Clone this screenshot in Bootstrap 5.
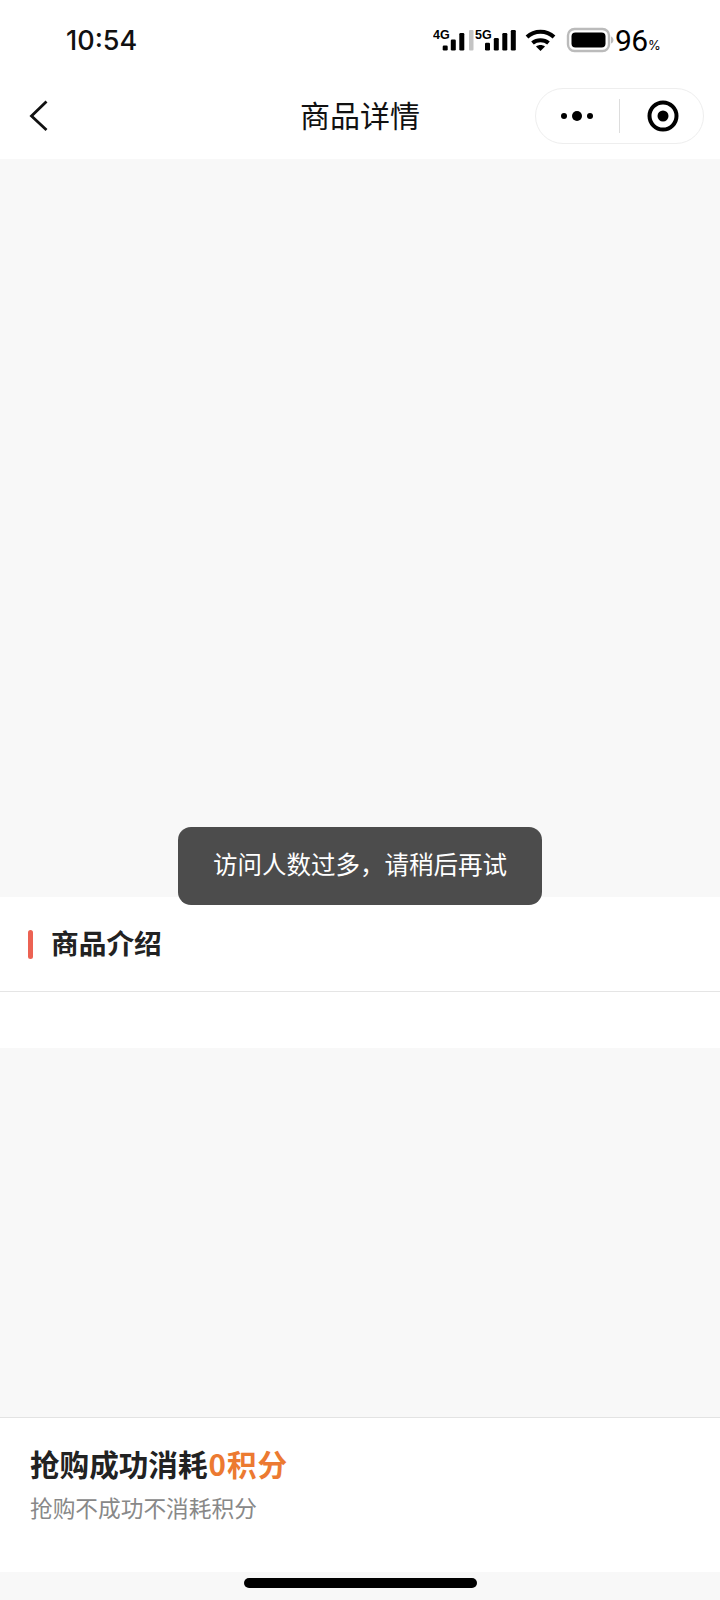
<!DOCTYPE html>
<html lang="zh-CN">
  <head>
    <meta charset="UTF-8" />
    <title>商品详情</title>
    <link
      href="https://cdn.jsdelivr.net/npm/bootstrap@5.3.3/dist/css/bootstrap.min.css"
      rel="stylesheet"
    />
    <style>
      body {
        font-family: "Noto Sans CJK SC", "Liberation Sans", sans-serif;
        background: #f8f8f8;
      }
      .phone-page {
        width: 720px;
        height: 1600px;
        overflow: hidden;
      }
      .status-row {
        height: 80px;
        padding-left: 66px;
        padding-right: 59px;
      }
      .status-time {
        font-family: Inter, sans-serif;
        font-size: 27px;
        font-weight: 500;
        color: #111;
        margin-top: 2px;
      }
      .status-icons {
        width: 228px;
        height: 48px;
        display: block;
      }
      .net-label {
        font-family: "Liberation Sans", sans-serif;
        font-size: 12.5px;
        font-weight: 700;
      }
      .batt-num {
        font-family: Roboto, sans-serif;
        font-size: 30px;
        letter-spacing: -0.5px;
      }
      .batt-pct {
        font-family: Inter, sans-serif;
        font-size: 13px;
      }
      .title-row {
        height: 79px;
        display: grid;
        grid-template-columns: 1fr auto 1fr;
        padding-right: 16px;
        padding-left: 16px;
      }
      .page-title {
        font-size: 30px;
        line-height: 40px;
        color: #111;
        margin-bottom: 11px;
      }
      .back-icon {
        width: 24px;
        height: 36px;
        margin-left: 12px;
        margin-bottom: 8px;
      }
      .capsule {
        width: 169px;
        height: 56px;
        border: 1.5px solid #eee;
        border-radius: 28px;
        margin-bottom: 7px;
      }
      .capsule svg {
        width: 166px;
        height: 53px;
        display: block;
      }
      .gallery-area {
        height: 738px;
      }
      .toast-box {
        position: absolute;
        left: 178px;
        top: 826.500px;
        width: 364px;
        height: 78px;
        padding-bottom: 2px;
        background: #4c4c4c;
        border-radius: 13px;
        color: #fff;
        font-size: 24.5px;
      }
      .intro-head {
        height: 95px;
        padding-left: 28px;
        border-bottom: 1.5px solid #e5e5e5;
      }
      .intro-mark {
        width: 5px;
        height: 29px;
        border-radius: 3px;
        background: #ec6253;
        margin-right: 18px;
      }
      .intro-title {
        font-size: 27.700px;
        font-weight: 700;
        color: #222;
        margin-bottom: 3px;
      }
      .intro-body {
        height: 56px;
      }
      .buy-bar {
        height: 155px;
        padding: 24px 30px 0;
        border-top: 1.5px solid #e3e3e3;
      }
      .buy-title {
        font-size: 29.600px;
        line-height: 44px;
        font-weight: 700;
        color: #222;
      }
      .buy-title span {
        color: #ec7a31;
        letter-spacing: 1px;
        margin-left: 1px;
      }
      .buy-note {
        font-size: 22.700px;
        line-height: 34px;
        color: #888;
        margin-top: 5px;
      }
      .home-strip {
        height: 28px;
        padding-top: 6px;
      }
      .home-bar {
        width: 233px;
        height: 10px;
        border-radius: 5px;
        background: #000;
      }
    </style>
  </head>
  <body>
    <div class="phone-page position-relative d-flex flex-column">
      <div class="bg-white">
        <div class="status-row d-flex align-items-center justify-content-between">
          <span class="status-time">10:54</span>
          <svg class="status-icons" viewBox="433 16 228 48">
            <text class="net-label" x="433" y="39">4G</text>
            <rect x="442.700" y="45.500" width="5" height="5" rx="1.200" />
            <rect x="450.800" y="39.500" width="5" height="11" rx="1.200" />
            <rect x="459.300" y="33" width="5" height="17.500" rx="1.200" />
            <rect x="469" y="30" width="4.500" height="20.500" rx="1" fill="#c4c4c4" />
            <text class="net-label" x="475" y="39">5G</text>
            <rect x="485" y="42.700" width="5" height="7.800" rx="1.200" />
            <rect x="493.800" y="38" width="5" height="12.500" rx="1.200" />
            <rect x="502.300" y="33" width="5" height="17.500" rx="1.200" />
            <rect x="510.800" y="30" width="5" height="20.500" rx="1.200" />
            <g fill="none" stroke="#000" stroke-width="4">
              <path d="M527 37c7.500-7 19.500-7 27 0" />
              <path d="M532.500 43c4.500-3.800 11.500-3.800 16 0" />
            </g>
            <path d="M536 46.500c2.600-2 6.400-2 9 0l-4.500 4.500z" />
            <rect x="568" y="29" width="41" height="22" rx="6.500" fill="none" stroke="#bbb" stroke-width="2.400" />
            <rect x="571.500" y="32.500" width="34" height="15" rx="4" />
            <path d="M611 36.500c1.500.5 2.500 2 2.500 3.500s-1 3-2.500 3.500z" fill="#bbb" />
            <text class="batt-num" x="615" y="51">96</text>
            <text class="batt-pct" x="648" y="50">%</text>
          </svg>
        </div>
        <div class="title-row align-items-center">
          <svg class="back-icon" viewBox="0 0 24 36">
            <path d="M18.500 3.500 3.500 18l15 14" fill="none" stroke="#111" stroke-width="2.800" />
          </svg>
          <div class="page-title">商品详情</div>
          <div class="capsule ms-auto">
            <svg viewBox="536 89 166 53">
              <circle cx="564" cy="116" r="3" />
              <circle cx="577" cy="116" r="5" />
              <circle cx="590" cy="116" r="3" />
              <rect x="619" y="99" width="1" height="34" fill="#ddd" />
              <circle cx="663" cy="116" r="13.500" fill="none" stroke="#000" stroke-width="4" />
              <circle cx="663" cy="116" r="5.500" />
            </svg>
          </div>
        </div>
      </div>

      <div class="gallery-area"></div>

      <div class="bg-white">
        <div class="intro-head d-flex align-items-center">
          <div class="intro-mark"></div>
          <div class="intro-title">商品介绍</div>
        </div>
        <div class="intro-body"></div>
      </div>

      <div class="flex-grow-1"></div>

      <div class="buy-bar bg-white">
        <div class="buy-title">抢购成功消耗<span>0积分</span></div>
        <div class="buy-note">抢购不成功不消耗积分</div>
      </div>
      <div class="home-strip d-flex justify-content-center">
        <div class="home-bar"></div>
      </div>

      <div class="toast-box d-flex align-items-center justify-content-center">访问人数过多，请稍后再试</div>
    </div>

    <script src="https://cdn.jsdelivr.net/npm/bootstrap@5.3.3/dist/js/bootstrap.bundle.min.js"></script>
  </body>
</html>
